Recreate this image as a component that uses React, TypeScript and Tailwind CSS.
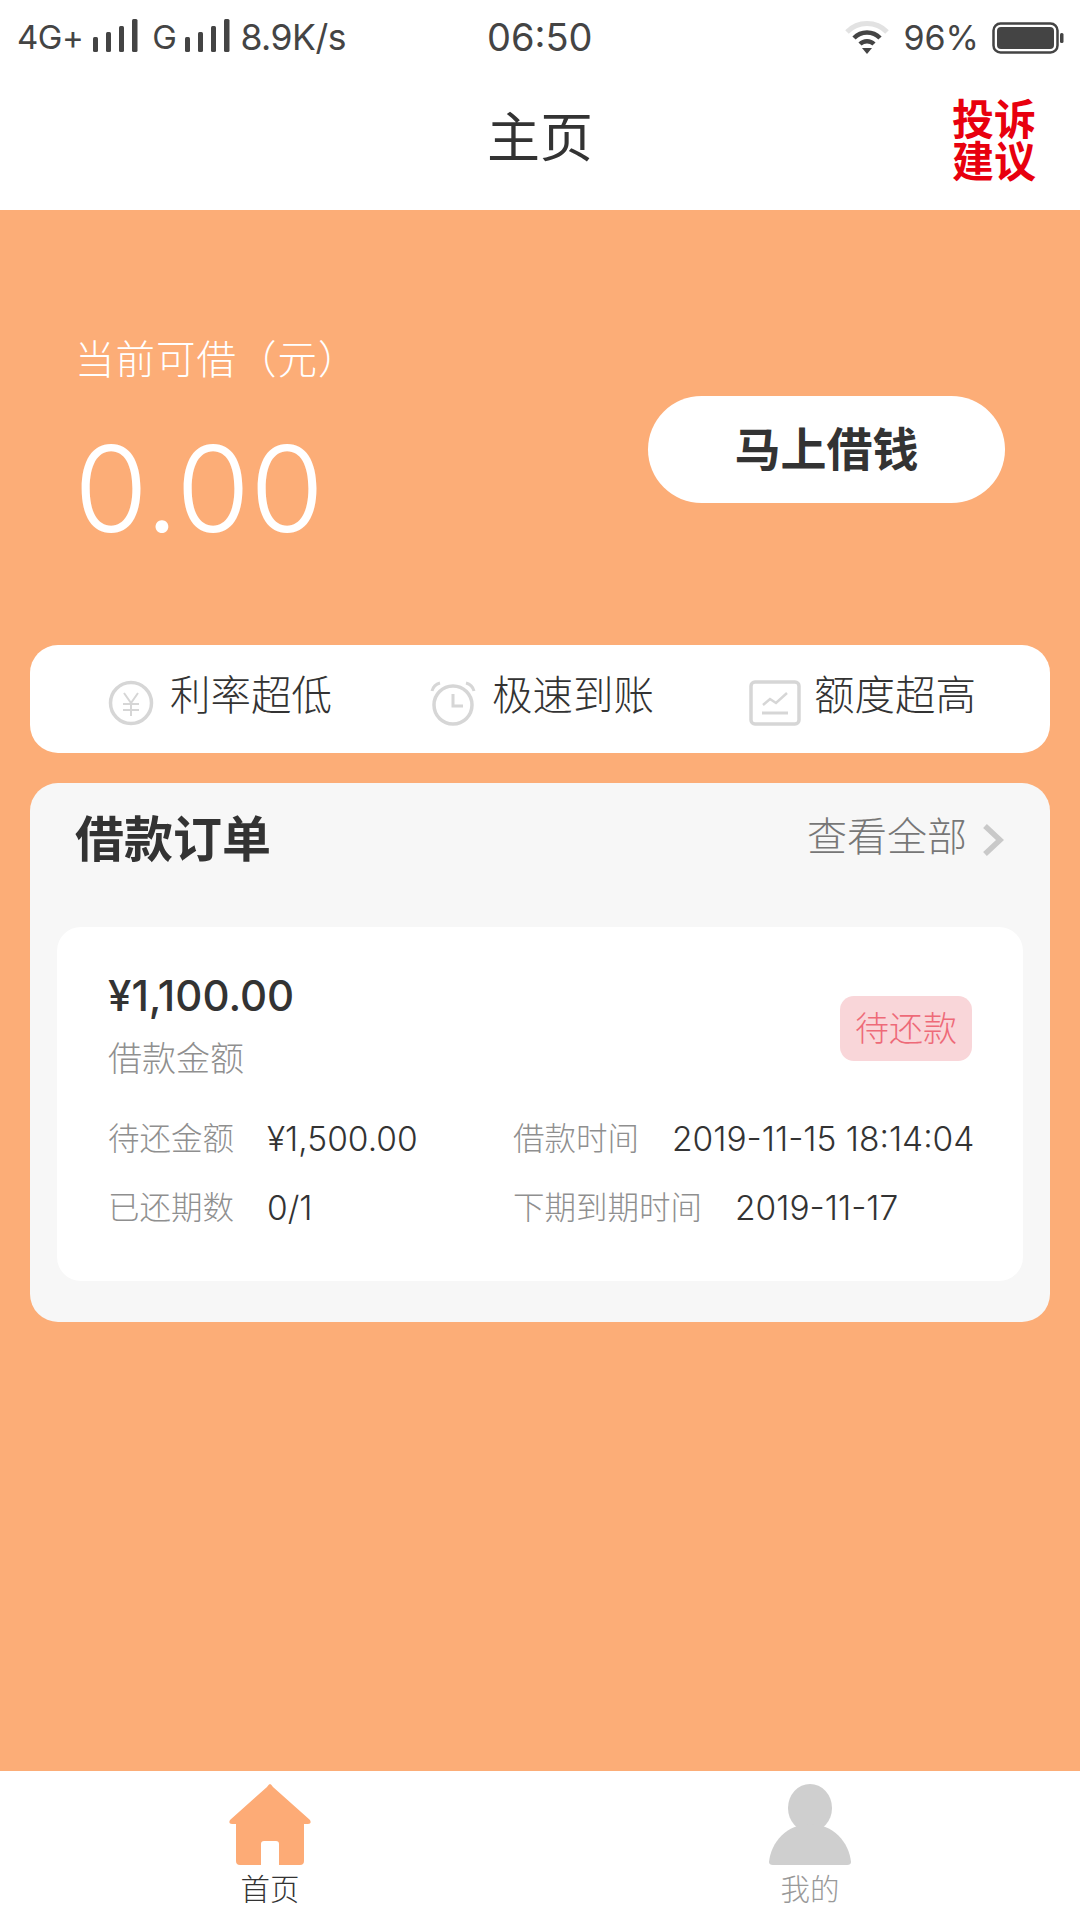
const FONT = "font-['Inter','Noto_Sans_CJK_SC',sans-serif]";

function SignalBars() {
  return (
    <svg width={47} height={34} viewBox="0 0 47 34" fill="#444">
      <rect x={1} y={18} width={5} height={15} rx={1.5} />
      <rect x={14} y={13} width={5} height={20} rx={1.5} />
      <rect x={27} y={7} width={5} height={26} rx={1.5} />
      <rect x={40} y={0} width={5.5} height={33} rx={1.5} />
    </svg>
  );
}

function StatusBar() {
  return (
    <div className="relative flex h-[75px] items-center justify-between pl-[17px] pr-[16px] text-[#444]">
      <div className="flex items-center text-[33px] tracking-[-0.5px]">
        <span>4G+</span>
        <span className="ml-[9px] -mt-[4px]"><SignalBars /></span>
        <span className="ml-[13px]">G</span>
        <span className="ml-[8px] -mt-[4px]"><SignalBars /></span>
        <span className="ml-[9px] text-[35.5px]">8.9K/s</span>
      </div>
      <span className="absolute left-[487px] text-[38px]">06:50</span>
      <div className="flex items-center">
        <svg width={46} height={34} viewBox="0 0 46 34" fill="none" strokeLinecap="butt">
          <path d="M3 11 A28 28 0 0 1 43 11" stroke="#e2e2e2" strokeWidth={5} />
          <path d="M10 17 A18 18 0 0 1 36 17" stroke="#444" strokeWidth={4.5} />
          <path d="M16 23 A10 10 0 0 1 30 23" stroke="#444" strokeWidth={4.5} />
          <path d="M18 27 L28 27 L23 33 Z" fill="#444" />
        </svg>
        <span className="ml-[13px] text-[34px]">96%</span>
        <svg className="ml-[13px]" width={72} height={32} viewBox="0 0 72 32">
          <rect x={1.5} y={1.5} width={64} height={29} rx={7} fill="none" stroke="#444" strokeWidth={2.5} />
          <rect x={5} y={5} width={57} height={22} rx={4} fill="#444" />
          <rect x={68} y={11} width={3.5} height={10} rx={1.5} fill="#444" />
        </svg>
      </div>
    </div>
  );
}

function Header() {
  return (
    <header className="relative flex h-[135px] items-center justify-center bg-white pb-[8px]">
      <h1 className="text-[53px] font-normal text-[#333]">主页</h1>
      <a className="absolute right-[44px] top-[24px] w-[84px] text-[42px] font-bold leading-[42px] text-[#e8000e]">
        投诉建议
      </a>
    </header>
  );
}

const FEATURES = [
  {
    label: "利率超低",
    icon: (
      <svg width={46} height={46} viewBox="0 0 46 46" fill="none" stroke="#d6d6d6" strokeWidth={3.5}>
        <circle cx={23} cy={23} r={20.5} />
        <path d="M16 13l7 10 7-10M15 24h16M15 30h16M23 23v13" strokeWidth={2} />
      </svg>
    ),
  },
  {
    label: "极速到账",
    icon: (
      <svg width={46} height={46} viewBox="0 0 46 46" fill="none" stroke="#d6d6d6" strokeWidth={3.5}>
        <circle cx={23} cy={25} r={19} />
        <path d="M23 14v12h10" strokeWidth={3} />
        <path d="M2 11c1-4 4-7 8-8M44 11c-1-4-4-7-8-8" strokeWidth={3} />
      </svg>
    ),
  },
  {
    label: "额度超高",
    icon: (
      <svg className="shrink-0" width={52} height={46} viewBox="0 0 52 46" fill="none" stroke="#d6d6d6" strokeWidth={3.5}>
        <rect x={2} y={2} width={48} height={42} rx={4} />
        <path d="M14 25l7-6 6 4 11-10" strokeWidth={2.5} />
        <path d="M13 33h26" strokeWidth={3} />
      </svg>
    ),
  },
];

function FeatureCard() {
  return (
    <div className="mx-[30px] flex h-[108px] items-center rounded-[28px] bg-white pl-[78px]">
      {FEATURES.map((f) => (
        <div key={f.label} className="flex w-[322px] shrink-0 items-center gap-[16px]">
          <span className="mt-[8px] flex w-[46px] justify-center">{f.icon}</span>
          <span className="-mt-[6px] text-[40.5px] font-light leading-none text-[#333]">{f.label}</span>
        </div>
      ))}
    </div>
  );
}

function OrderCard() {
  return (
    <div className="mx-[27px] h-[354px] rounded-[24px] bg-white px-[51px] pt-[44px]">
      <div className="flex items-center justify-between">
        <div>
          <div className="text-[42px] font-medium leading-[50px] text-[#333]">¥1,100.00</div>
          <div className="mt-[14px] text-[34px] font-light leading-[48px] text-[#8f8f8f]">借款金额</div>
        </div>
        <span className="mt-[3px] rounded-[14px] bg-[#f9d6d9] px-[15px] py-[10px] text-[34px] font-light leading-[45px] text-[#ee6a78]">
          待还款
        </span>
      </div>
      <div className="mt-[36px] grid grid-cols-[405px_1fr] gap-y-[29px] text-[31.5px] font-light leading-[40px]">
        <Field label="待还金额" value="¥1,500.00" />
        <Field label="借款时间" value="2019-11-15 18:14:04" />
        <Field label="已还期数" value="0/1" />
        <Field label="下期到期时间" value="2019-11-17" />
      </div>
    </div>
  );
}

function Field({ label, value }: { label: string; value: string }) {
  return (
    <div className="flex gap-[33px] whitespace-nowrap">
      <span className="text-[#8f8f8f]">{label}</span>
      <span className="text-[33.5px] text-[#333]">{value}</span>
    </div>
  );
}

function TabBar() {
  return (
    <nav className="flex h-[149px] shrink-0 bg-white">
      <div className="flex w-[540px] flex-col items-center pt-[13px]">
        <svg width={82} height={82} viewBox="0 0 82 82" fill="#fdab76">
          <path d="M41 0 Q42 0 44 3 L81 36 Q83 40 79 40 L75 40 L75 77 Q75 81 71 81 L50 81 L50 60 Q50 57 47 57 L35 57 Q32 57 32 60 L32 81 L11 81 Q7 81 7 77 L7 40 L3 40 Q-1 40 1 36 L38 3 Q40 0 41 0 Z" />
        </svg>
        <span className="mt-[5px] text-[29.5px] font-light leading-[36px] text-[#333]">首页</span>
      </div>
      <div className="flex w-[540px] flex-col items-center pt-[13px]">
        <svg width={82} height={82} viewBox="0 0 82 82" fill="#cfcfcf">
          <ellipse cx={41} cy={24} rx={22} ry={24} />
          <path d="M41 40 C64 40 80 58 82 78 Q82 81 78 81 L4 81 Q0 81 0 78 C2 58 18 40 41 40 Z" />
        </svg>
        <span className="mt-[5px] text-[29.5px] font-light leading-[36px] text-[#999]">我的</span>
      </div>
    </nav>
  );
}

export default function App() {
  return (
    <div className={`flex h-[1920px] w-[1080px] flex-col overflow-hidden bg-[#fcad77] ${FONT}`}>
      <div className="bg-white">
        <StatusBar />
        <Header />
      </div>

      <main className="flex-1">
        <section className="flex h-[435px] justify-between pl-[75px] pr-[75px]">
          <div className="pt-[125px]">
            <p className="text-[39.5px] font-light leading-[50px] tracking-[1px] text-white">当前可借（元）</p>
            <p className="mt-[42px] -ml-[1px] text-[120px] font-light leading-[124px] text-white">0.00</p>
          </div>
          <button className="mt-[186px] flex h-[107px] w-[357px] items-center justify-center rounded-full bg-white text-[46px] font-bold text-[#333]">
            马上借钱
          </button>
        </section>

        <FeatureCard />

        <section className="mx-[30px] mt-[30px] h-[539px] rounded-[28px] bg-[#f7f7f7]">
          <div className="flex h-[144px] items-start justify-between pl-[45px] pr-[46px] pt-[24px]">
            <h2 className="text-[49px] font-bold leading-[66px] text-[#333]">借款订单</h2>
            <div className="flex items-center">
              <span className="text-[40px] font-light leading-[60px] text-[#777]">查看全部</span>
              <svg className="ml-[15px] mt-[6px]" width={22} height={34} viewBox="0 0 22 34" fill="none" stroke="#c9c9c9" strokeWidth={5.5}>
                <path d="M3 3l15 14L3 31" />
              </svg>
            </div>
          </div>
          <OrderCard />
        </section>
      </main>

      <TabBar />
    </div>
  );
}
